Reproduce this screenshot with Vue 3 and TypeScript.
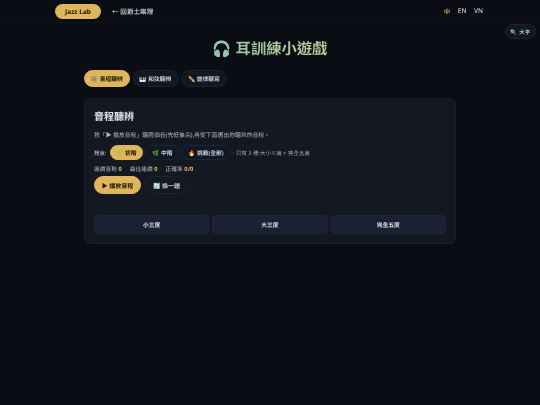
<script setup lang="ts">
const tabs = [
  { icon: '🎼', label: '音程聽辨', active: true },
  { icon: '🎹', label: '和弦聽辨', active: false },
  { icon: '✏️', label: '旋律聽寫', active: false },
]
const levels = [
  { icon: '🌱', label: '初階', active: true },
  { icon: '🌿', label: '中階', active: false },
  { icon: '🔥', label: '挑戰(全部)', active: false },
]
const stats = [
  { label: '連續答對', value: '0' },
  { label: '最佳連續', value: '0' },
  { label: '正確率', value: '0/0' },
]
const answers = ['小三度', '大三度', '完全五度']
</script>

<template>
  <div class="page">
    <header class="nav">
      <div class="nav-left">
        <span class="brand">Jazz Lab</span>
        <span class="back">← 回爵士樂理</span>
      </div>
      <div class="langs">
        <span class="lang on">中</span>
        <span class="lang">EN</span>
        <span class="lang">VN</span>
      </div>
    </header>
    <button class="zoom-btn">🔍 大字</button>
    <main class="main">
      <h1 class="title">🎧 耳訓練小遊戲</h1>
      <div class="tabs">
        <button v-for="t in tabs" :key="t.label" class="pill tab" :class="{ active: t.active }">{{ t.icon }} {{ t.label }}</button>
      </div>
      <section class="card">
        <h2 class="card-title">音程聽辨</h2>
        <p class="desc">按「▶ 播放音程」聽兩個音(先低後高),再從下面選出你聽到的音程。</p>
        <div class="levels">
          <span class="lv-label">難度:</span>
          <button v-for="l in levels" :key="l.label" class="pill level" :class="{ active: l.active }">{{ l.icon }} {{ l.label }}</button>
          <span class="hint">· 只有 3 種:大小三度 + 完全五度</span>
        </div>
        <div class="stats">
          <span v-for="s in stats" :key="s.label">{{ s.label }} <b>{{ s.value }}</b></span>
        </div>
        <div class="actions">
          <button class="pill play active">▶ 播放音程</button>
          <button class="pill next">🔄 換一題</button>
        </div>
        <div class="answers">
          <button v-for="a in answers" :key="a" class="answer">{{ a }}</button>
        </div>
      </section>
    </main>
  </div>
</template>

<style>
html, body { margin: 0; background: #0a0d14; }
</style>

<style scoped>
.page {
  position: relative;
  width: 540px;
  height: 405px;
  overflow: hidden;
  background: #0a0d14;
  color: #e5e7eb;
  font-family: "Noto Sans", "Noto Sans CJK TC", sans-serif;
  text-rendering: geometricPrecision;
  opacity: 0.999;
}
button { font-family: inherit; text-rendering: inherit; cursor: pointer; }
.nav {
  height: 23px;
  box-sizing: border-box;
  padding: 0 57px 0 55px;
  display: flex;
  align-items: center;
  justify-content: space-between;
  border-bottom: 1px solid #0f131b;
}
.nav-left { display: flex; align-items: center; gap: 11px; }
.brand {
  width: 46px;
  height: 15px;
  border-radius: 8px;
  background: #dfb65c;
  color: #1a1407;
  font-size: 6.5px;
  font-weight: 700;
  display: flex;
  align-items: center;
  justify-content: center;
}
.back { font-size: 6.6px; font-weight: 500; color: #d4d7dd; }
.langs { display: flex; gap: 7.5px; font-size: 6.5px; font-weight: 500; color: #c9cdd5; }
.lang.on { color: #d4a853; }
.zoom-btn {
  position: absolute;
  top: 24px;
  right: 4px;
  width: 31px;
  height: 15px;
  padding: 0;
  border-radius: 8px;
  border: 1px solid #1c2330;
  background: #111722;
  color: #cfd3da;
  font-size: 5.5px;
  font-weight: 500;
}
.main {
  width: 372px;
  margin: 0 auto;
  padding-top: 15px;
}
.title {
  margin: 0;
  text-align: center;
  font-size: 15.3px;
  line-height: 23px;
  font-weight: 700;
  background: linear-gradient(90deg, #6fbfae 16%, #e0cf8a 84%);
  -webkit-background-clip: text;
  background-clip: text;
  color: transparent;
}
.tabs { display: flex; gap: 2.5px; margin-top: 9px; }
.pill {
  border-radius: 9px;
  border: 1px solid #1a212d;
  background: #121722;
  color: #c4c9d1;
  font-weight: 600;
  padding: 0;
  display: flex;
  align-items: center;
  justify-content: center;
}
.pill.active { background: #dfb65c; border-color: #dfb65c; color: #1a1407; font-weight: 700; }
.tab { width: 46px; height: 17px; font-size: 5.75px; }
.card {
  margin-top: 11px;
  height: 146px;
  box-sizing: border-box;
  padding: 9px 9px 0;
  border: 1px solid #1a202b;
  border-radius: 6px;
  background: #131821;
  display: flex;
  flex-direction: column;
}
.card-title { margin: 0; font-size: 10px; line-height: 16px; font-weight: 600; color: #dfe2e7; }
.desc { margin: 7px 0 0; font-size: 5.85px; line-height: 9px; color: #b4b9c2; }
.levels { display: flex; align-items: center; gap: 3px; margin-top: 5px; height: 15px; }
.lv-label { font-size: 5.5px; color: #b4b9c2; width: 13px; }
.level { height: 15px; font-size: 5.75px; }
.level:not(.active) { background: #0f1825; border-color: #1c2636; }
.level:nth-of-type(1) { width: 33px; }
.level:nth-of-type(2) { width: 33px; }
.level:nth-of-type(3) { width: 48px; }
.hint { font-size: 5.5px; color: #a4a9b3; }
.stats { display: flex; gap: 8px; margin-top: 4px; font-size: 5.75px; line-height: 11px; color: #b4b9c2; }
.stats b { color: #dfb65c; font-weight: 700; }
.actions { display: flex; gap: 4px; margin-top: 1px; }
.play { width: 47px; height: 18px; font-size: 6px; }
.next { width: 43px; height: 18px; font-size: 6px; background: transparent; border-color: #1c2432; }
.answers { display: grid; grid-template-columns: repeat(3, 1fr); gap: 3px; margin-top: 21px; }
.answer {
  height: 19px;
  padding: 0;
  border-radius: 4px;
  border: 1px solid #1e2635;
  background: #1a2130;
  color: #dfe2e7;
  font-size: 5.75px;
  font-weight: 700;
}
</style>
